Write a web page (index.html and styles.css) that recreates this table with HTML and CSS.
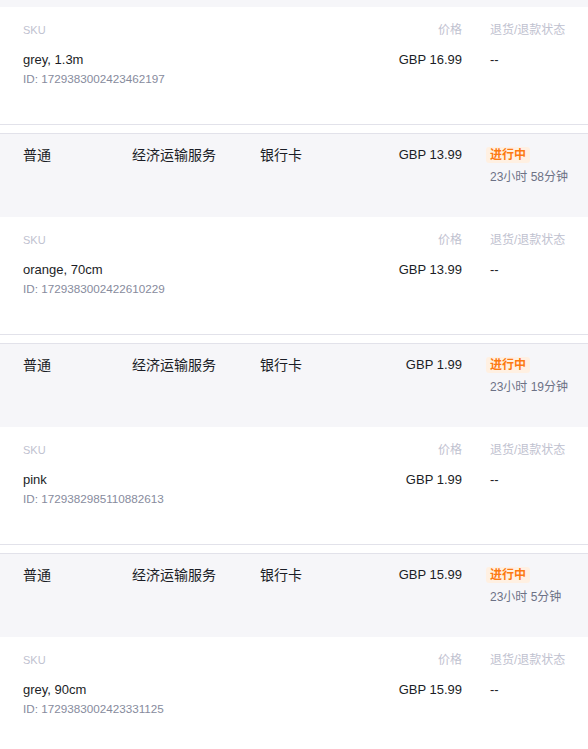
FILE: index.html
```html
<!DOCTYPE html>
<html lang="zh-CN">
<head>
<meta charset="utf-8">
<title>订单</title>
<link rel="stylesheet" href="styles.css">
</head>
<body>
<div class="list">
  <section class="card">
    <div class="head"></div>
    <div class="body">
      <div class="sku">
        <div class="label sku-label">SKU</div>
        <div class="name">grey, 1.3m</div>
        <div class="id">ID: 1729383002423462197</div>
      </div>
      <div class="price-col">
        <div class="label">价格</div>
        <div class="name">GBP 16.99</div>
      </div>
      <div class="state-col">
        <div class="label">退货/退款状态</div>
        <div class="name">--</div>
      </div>
    </div>
  </section>

  <section class="card">
    <div class="head">
      <div class="cell">普通</div>
      <div class="cell">经济运输服务</div>
      <div class="cell">银行卡</div>
      <div class="cell price">GBP 13.99</div>
      <div class="cell status"><span class="badge">进行中</span><span class="timer">23小时 58分钟</span></div>
    </div>
    <div class="body">
      <div class="sku">
        <div class="label sku-label">SKU</div>
        <div class="name">orange, 70cm</div>
        <div class="id">ID: 1729383002422610229</div>
      </div>
      <div class="price-col">
        <div class="label">价格</div>
        <div class="name">GBP 13.99</div>
      </div>
      <div class="state-col">
        <div class="label">退货/退款状态</div>
        <div class="name">--</div>
      </div>
    </div>
  </section>

  <section class="card">
    <div class="head">
      <div class="cell">普通</div>
      <div class="cell">经济运输服务</div>
      <div class="cell">银行卡</div>
      <div class="cell price">GBP 1.99</div>
      <div class="cell status"><span class="badge">进行中</span><span class="timer">23小时 19分钟</span></div>
    </div>
    <div class="body">
      <div class="sku">
        <div class="label sku-label">SKU</div>
        <div class="name">pink</div>
        <div class="id">ID: 1729382985110882613</div>
      </div>
      <div class="price-col">
        <div class="label">价格</div>
        <div class="name">GBP 1.99</div>
      </div>
      <div class="state-col">
        <div class="label">退货/退款状态</div>
        <div class="name">--</div>
      </div>
    </div>
  </section>

  <section class="card">
    <div class="head">
      <div class="cell">普通</div>
      <div class="cell">经济运输服务</div>
      <div class="cell">银行卡</div>
      <div class="cell price">GBP 15.99</div>
      <div class="cell status"><span class="badge">进行中</span><span class="timer">23小时 5分钟</span></div>
    </div>
    <div class="body">
      <div class="sku">
        <div class="label sku-label">SKU</div>
        <div class="name">grey, 90cm</div>
        <div class="id">ID: 1729383002423331125</div>
      </div>
      <div class="price-col">
        <div class="label">价格</div>
        <div class="name">GBP 15.99</div>
      </div>
      <div class="state-col">
        <div class="label">退货/退款状态</div>
        <div class="name">--</div>
      </div>
    </div>
  </section>
</div>
</body>
</html>
```
FILE: styles.css
```css
html, body {
  margin: 0;
  padding: 0;
  background: #ffffff;
}

body {
  font-family: "Liberation Sans", "Noto Sans CJK SC", sans-serif;
  color: #1b1d26;
  overflow: hidden;
}

.list {
  margin-top: -77px;
  display: flex;
  flex-direction: column;
  gap: 8px;
}

.card {
  border-top: 1px solid #e2e2ea;
  border-bottom: 1px solid #e2e2ea;
}

.head {
  box-sizing: border-box;
  height: 83px;
  background: #f6f6f9;
  padding: 11px 0 0 23px;
  display: grid;
  grid-template-columns: 109px 128px 102px 100px 126px;
  align-items: start;
}

.cell {
  font-size: 14px;
  line-height: 20px;
}

.price {
  font-size: 13px;
  text-align: right;
}

.status {
  padding-left: 28px;
  padding-top: 2px;
  display: flex;
  flex-direction: column;
  align-items: flex-start;
}

.badge {
  margin-left: -4px;
  padding: 0 4px;
  background: #fff0e2;
  color: #fd7a12;
  font-size: 12px;
  font-weight: 700;
  line-height: 16px;
  border-radius: 3px;
}

.timer {
  margin-top: 5px;
  font-size: 12px;
  line-height: 18px;
  color: #6d7286;
}

.body {
  box-sizing: border-box;
  height: 117px;
  padding: 14px 0 0 23px;
  display: grid;
  grid-template-columns: 1fr 100px 126px;
}

.price-col {
  text-align: right;
}

.state-col {
  padding-left: 28px;
}

.label {
  font-size: 12px;
  line-height: 18px;
  color: #bfc2d0;
  margin-bottom: 11px;
}

.sku-label {
  font-size: 11px;
}

.name {
  font-size: 13px;
  line-height: 20px;
  color: #1b1d26;
}

.id {
  font-size: 11.7px;
  line-height: 18px;
  color: #878b9d;
}
```
